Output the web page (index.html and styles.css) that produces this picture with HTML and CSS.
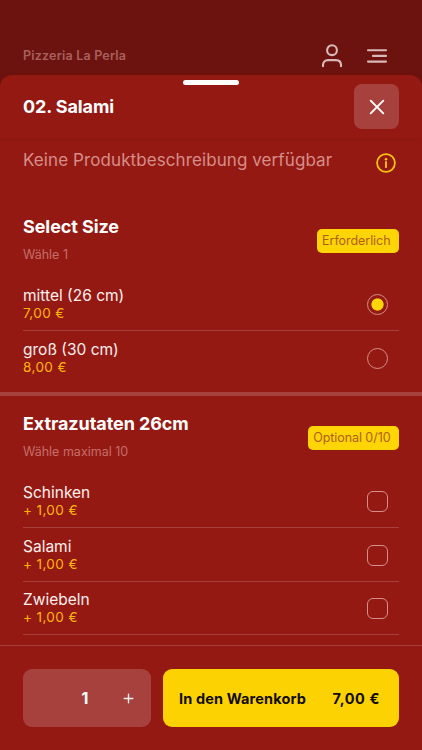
FILE: index.html
```html
<!DOCTYPE html>
<html lang="de">
<head>
<meta charset="utf-8">
<meta name="viewport" content="width=device-width, initial-scale=1">
<title>02. Salami – Pizzeria La Perla</title>
<link rel="stylesheet" href="styles.css">
</head>
<body>
<header class="topbar">
  <span class="brand">Pizzeria La Perla</span>
  <svg class="user" width="22" height="24" viewBox="0 0 22 24"><circle cx="11" cy="6.2" r="4.9"/><path d="M2 22.3v-1.2c0-3 2-5 5-5h8c3 0 5 2 5 5v1.2"/></svg>
  <svg class="menu" width="22" height="16" viewBox="0 0 22 16"><path d="M2 2.3h18M7 7.9h13M2 13.6h18"/></svg>
</header>
<main class="sheet">
  <div class="sheet-head">
    <span class="grip"></span>
    <h1>02. Salami</h1>
    <button class="close" aria-label="Schließen"><svg width="18" height="18" viewBox="0 0 18 18"><path d="M2.7 2.7l12.6 12.6M15.3 2.7L2.7 15.3"/></svg></button>
  </div>
  <div class="desc">
    <p>Keine Produktbeschreibung verfügbar</p>
    <svg class="info" width="22" height="22" viewBox="0 0 22 22"><circle cx="11" cy="11" r="8.9"/><path d="M11 10v5.2"/><circle class="dot" cx="11" cy="7.2" r="1.25"/></svg>
  </div>
  <section class="group">
    <div class="group-head">
      <div><h2>Select Size</h2><p class="hint">Wähle 1</p></div>
      <span class="badge">Erforderlich</span>
    </div>
    <div class="option"><div><div class="name">mittel (26 cm)</div><div class="price">7,00 €</div></div><span class="control radio checked"></span></div>
    <div class="option last"><div><div class="name">groß (30 cm)</div><div class="price">8,00 €</div></div><span class="control radio"></span></div>
  </section>
  <section class="group extras">
    <div class="group-head">
      <div><h2>Extrazutaten 26cm</h2><p class="hint">Wähle maximal 10</p></div>
      <span class="badge">Optional 0/10</span>
    </div>
    <div class="option"><div><div class="name">Schinken</div><div class="price">+ 1,00 €</div></div><span class="control"></span></div>
    <div class="option"><div><div class="name">Salami</div><div class="price">+ 1,00 €</div></div><span class="control"></span></div>
    <div class="option"><div><div class="name">Zwiebeln</div><div class="price">+ 1,00 €</div></div><span class="control"></span></div>
  </section>
  <footer class="cart">
    <div class="stepper"><b>1</b><svg width="11" height="11" viewBox="0 0 11 11"><path d="M5.5 1.2v8.6M1.2 5.5h8.6"/></svg></div>
    <button class="add"><span class="add-label">In den Warenkorb</span><span class="add-price">7,00 €</span></button>
  </footer>
</main>
</body>
</html>
```
FILE: styles.css
```css
* { box-sizing: border-box; }
body {
  margin: 0;
  width: 422px;
  height: 750px;
  overflow: hidden;
  background: #6d130f;
  color: #fff;
  font-family: Inter, "Liberation Sans", sans-serif;
}
h1, h2, p { margin: 0; }
button { border: 0; padding: 0; font-family: inherit; }
svg { display: block; fill: none; stroke-linecap: round; stroke-linejoin: round; }

.topbar {
  display: flex;
  height: 75px;
  padding: 36px 34px 0 23px;
  align-items: center;
}
.brand {
  flex: 1;
  color: #a7615d;
  font-size: 12.5px;
  font-weight: 600;
  letter-spacing: 0.2px;
}
.user { stroke: #d9b9b8; stroke-width: 2.1; margin-right: 23px; }
.menu { stroke: #d9b9b8; stroke-width: 2.1; }

.sheet {
  display: flex;
  flex-direction: column;
  height: 675px;
  border-radius: 12px 12px 0 0;
  background: #951913;
}
.sheet-head {
  position: relative;
  display: flex;
  height: 63px;
  padding: 0 23px;
  align-items: center;
  justify-content: space-between;
  border-radius: 12px 12px 0 0;
  box-shadow: 0 1px 4px rgba(80, 0, 0, 0.18);
}
.grip {
  position: absolute;
  top: 5px;
  left: 183px;
  width: 56px;
  height: 5px;
  border-radius: 3px;
  background: #fff;
}
h1 { font-size: 18px; line-height: 22px; font-weight: 700; letter-spacing: -0.1px; }
.close {
  display: grid;
  width: 45px;
  height: 45px;
  place-items: center;
  border-radius: 8px;
  background: #a7413d;
}
.close svg { stroke: #fff; stroke-width: 1.9; }

.desc {
  display: flex;
  height: 61px;
  padding: 11px 25px 0 23px;
  justify-content: space-between;
}
.desc p { color: #d58e89; font-size: 17px; line-height: 22px; letter-spacing: 0.09px; }
.info { margin-top: 3px; stroke: #ffc50a; stroke-width: 1.8; }
.info .dot { fill: #ffc50a; stroke: none; }

.group { padding: 16px 23px 0; }
.group-head {
  display: flex;
  height: 62.5px;
  justify-content: space-between;
}
h2 { font-size: 18px; line-height: 24px; font-weight: 700; letter-spacing: -0.08px; }
.hint { margin-top: 7px; color: #c46e69; font-size: 12.5px; line-height: 18px; }
.badge {
  height: 24px;
  margin-top: 14px;
  padding: 0 8.5px 0 5px;
  border-radius: 5px;
  background: #ffd506;
  color: #ae5e12;
  font-size: 12.5px;
  line-height: 24px;
  letter-spacing: -0.06px;
  white-space: nowrap;
}
.option {
  display: flex;
  height: 53.5px;
  padding: 8.5px 11px 0 0;
  justify-content: space-between;
  border-bottom: 1px solid #a7413d;
}
.option.last { border-bottom-color: transparent; }
.name { color: #fff0ee; font-size: 15.5px; line-height: 20px; }
.price { color: #ffb60a; font-size: 13.5px; line-height: 15px; letter-spacing: 0.4px; }
.control {
  width: 21px;
  height: 21px;
  margin-top: 8px;
  border: 1px solid #d58e89;
  border-radius: 6px;
}
.radio { border-radius: 50%; }
.radio.checked {
  background: radial-gradient(circle at center, #ffd506 5.7px, transparent 6.5px);
}
.extras {
  margin-top: 7.5px;
  padding-top: 16px;
  border-top: 4px solid #a7413d;
}

.cart {
  display: flex;
  height: 105px;
  margin-top: auto;
  padding: 23px 23px 0;
  gap: 12px;
  border-top: 1px solid #a7413d;
}
.stepper {
  display: flex;
  width: 128px;
  height: 58px;
  padding-right: 17px;
  align-items: center;
  justify-content: flex-end;
  gap: 34.5px;
  border-radius: 9px;
  background: #a7413d;
  font-size: 16px;
}
.stepper b { line-height: 18px; }
.stepper svg { stroke: #fff0ee; stroke-width: 1.4; }
.add {
  display: flex;
  flex: 1;
  height: 58px;
  padding: 0 19px 0 16px;
  align-items: center;
  justify-content: space-between;
  border-radius: 9px;
  background: #fcd203;
  color: #120c00;
  font-size: 14.5px;
  font-weight: 700;
  white-space: nowrap;
}
.add-label { letter-spacing: 0.13px; }
.add-price { letter-spacing: 0.6px; }
```
